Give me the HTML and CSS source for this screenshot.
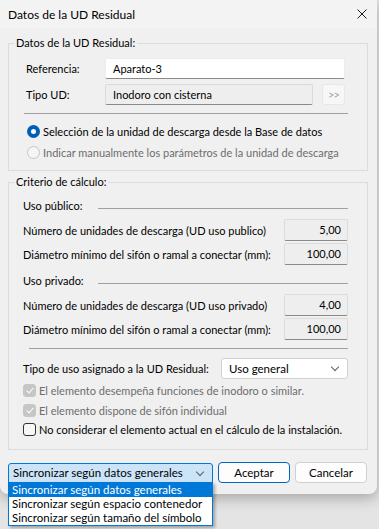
FILE: index.html
```html
<!DOCTYPE html>
<html lang="es">
  <head>
    <meta charset="UTF-8" />
    <title>Datos de la UD Residual</title>
    <link rel="stylesheet" href="styles.css">
  </head>
  <body>
    <div class="window">
      <div class="titlebar">
        <span class="title">Datos de la UD Residual</span>
        <svg class="close" width="10" height="10" viewBox="0 0 10 10">
          <path d="M0.5 0.5 L9.5 9.5 M9.5 0.5 L0.5 9.5" stroke="#1a1a1a" stroke-width="1" fill="none" />
        </svg>
      </div>

      <div class="content">
        <fieldset class="group group-datos">
          <legend>Datos de la UD Residual:</legend>
          <div class="field-row">
            <label>Referencia:</label>
            <div class="input wide">Aparato-3</div>
          </div>
          <div class="field-row">
            <label>Tipo UD:</label>
            <div class="input readonly">Inodoro con cisterna</div>
            <button class="more">&gt;&gt;</button>
          </div>
          <div class="sep"></div>
          <div class="radio checked"><span class="dot"></span>Selección de la unidad de descarga desde la Base de datos</div>
          <div class="radio disabled"><span class="dot"></span>Indicar manualmente los parámetros de la unidad de descarga</div>
        </fieldset>

        <fieldset class="group group-calc">
          <legend>Criterio de cálculo:</legend>

          <div class="subhead"><span>Uso público:</span><span class="line"></span></div>
          <div class="num-row">
            <span>Número de unidades de descarga (UD uso publico)</span>
            <div class="num">5,00</div>
          </div>
          <div class="num-row">
            <span>Diámetro mínimo del sifón o ramal a conectar (mm):</span>
            <div class="num">100,00</div>
          </div>

          <div class="subhead"><span>Uso privado:</span><span class="line"></span></div>
          <div class="num-row">
            <span>Número de unidades de descarga (UD uso privado)</span>
            <div class="num">4,00</div>
          </div>
          <div class="num-row">
            <span>Diámetro mínimo del sifón o ramal a conectar (mm):</span>
            <div class="num">100,00</div>
          </div>

          <div class="sep sep-calc"></div>

          <div class="tipo-row">
            <span>Tipo de uso asignado a la UD Residual:</span>
            <div class="select">Uso general<span class="chev"></span></div>
          </div>

          <div class="check checked disabled"><span class="box"></span>El elemento desempeña funciones de inodoro o similar.</div>
          <div class="check checked disabled"><span class="box"></span>El elemento dispone de sifón individual</div>
          <div class="check"><span class="box"></span>No considerar el elemento actual en el cálculo de la instalación.</div>
        </fieldset>
      </div>

      <div class="footer">
        <div class="combo">Sincronizar según datos generales<span class="chev"></span></div>
        <button class="btn default">Aceptar</button>
        <button class="btn">Cancelar</button>

        <ul class="dropdown">
          <li class="selected">Sincronizar según datos generales</li>
          <li>Sincronizar según espacio contenedor</li>
          <li>Sincronizar según tamaño del símbolo</li>
        </ul>
      </div>
    </div>
  </body>
</html>
```

FILE: styles.css
```css
body {
  margin: 0;
  background-color: #e4e4e4;
  font-family: Lato, "Liberation Sans", sans-serif;
  font-size: 11px;
  color: #000;
  width: 379px;
  height: 529px;
  overflow: hidden;
  white-space: nowrap;
}
.window {
  position: relative;
  width: 377px;
  height: 494px;
  background-color: #f0f0f0;
  border-radius: 0 0 8px 8px;
  box-shadow: 0 4px 14px rgba(0, 0, 0, 0.28);
  display: flex;
  flex-direction: column;
}
.titlebar {
  height: 28px;
  padding: 0 10px 0 8px;
  background-color: #f3f3f3;
  display: flex;
  align-items: center;
  justify-content: space-between;
  font-size: 12px;
  flex-shrink: 0;
}
.content {
  padding: 0 9px 0 8px;
}
.group {
  margin: 0;
  border: 1px solid #dcdcdc;
  padding: 0;
  min-width: 0;
}
.group legend {
  padding: 0 2px;
  line-height: 16px;
}
.group-datos {
  margin-top: 7px;
  height: 136px;
  box-sizing: border-box;
  padding: 7px 19px 0 15px;
}
.group-datos legend {
  margin-left: -10px;
}
.group-calc {
  margin-top: 3px;
  height: 276px;
  box-sizing: border-box;
  padding: 8px 19px 0 14px;
}
.group-calc legend {
  margin-left: -9px;
}
.field-row {
  display: grid;
  grid-template-columns: 70px 1fr 23px;
  column-gap: 9px;
  align-items: center;
  padding: 0 3px 0 2px;
  margin-bottom: 5px;
}
.input {
  height: 21px;
  box-sizing: border-box;
  line-height: 20px;
  padding: 0 7px;
  background: #fff;
  border: 1px solid #ececec;
  border-bottom-color: #8a8a8a;
  border-radius: 2px;
}
.input.wide {
  grid-column: 2 / 4;
}
.input.readonly {
  background: #eeeeee;
  border-color: #dadada;
  border-bottom-color: #8a8a8a;
}
.more {
  height: 21px;
  padding: 0;
  border: 1px solid #e8e8e8;
  border-radius: 3px;
  background: #f7f7f7;
  color: #9aa3b3;
  font-family: inherit;
  font-size: 11px;
  letter-spacing: -1px;
}
.sep {
  border-top: 1px solid #a0a0a0;
  margin: 8px 0 7px 0;
}
.radio {
  display: flex;
  align-items: center;
  height: 21px;
  padding-left: 3px;
}
.radio .dot {
  flex-shrink: 0;
  width: 13px;
  height: 13px;
  box-sizing: border-box;
  border-radius: 50%;
  border: 1px solid #a8a8a8;
  background: #f5f5f5;
  margin-right: 3px;
}
.radio.checked .dot {
  border: 4px solid #005fb8;
  background: #fff;
}
.radio.disabled {
  color: #6d6d6d;
}
.radio.disabled .dot {
  border-color: #c6c6c6;
}
.subhead {
  display: grid;
  grid-template-columns: 75px 1fr;
  align-items: center;
  line-height: 16px;
  margin-bottom: 5px;
}
.subhead .line {
  border-top: 1px solid #a0a0a0;
  margin-top: 4px;
}
.num-row {
  display: flex;
  align-items: center;
  justify-content: space-between;
  margin-bottom: 2px;
}
.num {
  flex-shrink: 0;
  width: 64px;
  height: 22px;
  box-sizing: border-box;
  line-height: 20px;
  text-align: right;
  padding-right: 6px;
  background: #eeeeee;
  border: 1px solid #dcdcdc;
  border-bottom-color: #8a8a8a;
  border-radius: 2px;
}
.num-row + .subhead {
  margin-top: 8px;
}
.sep-calc {
  margin: 8px 0 9px 6px;
}
.tipo-row {
  display: flex;
  align-items: center;
  justify-content: space-between;
  margin-bottom: 2px;
}
.select {
  position: relative;
  flex-shrink: 0;
  width: 127px;
  height: 21px;
  box-sizing: border-box;
  line-height: 19px;
  padding-left: 7px;
  font-size: 11.5px;
  background: #fff;
  border: 1px solid #d0d0d0;
  border-radius: 3px;
}
.chev {
  position: absolute;
  right: 9px;
  top: 5px;
  width: 5px;
  height: 5px;
  border-right: 1px solid #606060;
  border-bottom: 1px solid #606060;
  transform: rotate(45deg);
}
.check {
  display: flex;
  align-items: center;
  height: 19.5px;
}
.check .box {
  flex-shrink: 0;
  width: 13px;
  height: 13px;
  box-sizing: border-box;
  border: 1px solid #333;
  border-radius: 3px;
  background: #f7f7f7;
  margin-right: 3px;
  position: relative;
}
.check.checked .box {
  background: #c6c6c6;
  border-color: #c6c6c6;
}
.check.checked .box::after {
  content: "";
  position: absolute;
  left: 4px;
  top: 1px;
  width: 3px;
  height: 6px;
  border-right: 1px solid #fff;
  border-bottom: 1px solid #fff;
  transform: rotate(40deg);
}
.check.disabled {
  color: #6d6d6d;
}
.footer {
  position: relative;
  display: flex;
  align-items: center;
  gap: 5px;
  padding: 12px 0 0 8px;
}
.combo {
  position: relative;
  width: 205px;
  height: 20px;
  box-sizing: border-box;
  line-height: 18px;
  padding-left: 4px;
  font-size: 11.5px;
  background: #cce4f7;
  border: 1px solid #0078d4;
  border-radius: 3px 3px 0 0;
}
.btn {
  width: 72px;
  height: 21px;
  padding: 0;
  font-family: inherit;
  font-size: 11.5px;
  background: #fdfdfd;
  border: 1px solid #d0d0d0;
  border-radius: 4px;
}
.btn.default {
  border-color: #0067c0;
}
.dropdown {
  position: absolute;
  left: 8px;
  top: 32px;
  width: 205px;
  box-sizing: border-box;
  margin: 0;
  padding: 0;
  list-style: none;
  font-size: 11.5px;
  background: #fff;
  border: 1px solid #0078d7;
  box-shadow: 2px 2px 3px rgba(0, 0, 0, 0.3);
}
.dropdown li {
  height: 14px;
  line-height: 14px;
  padding-left: 3px;
  white-space: nowrap;
}
.dropdown li.selected {
  background: #0078d7;
  color: #fff;
}
```
